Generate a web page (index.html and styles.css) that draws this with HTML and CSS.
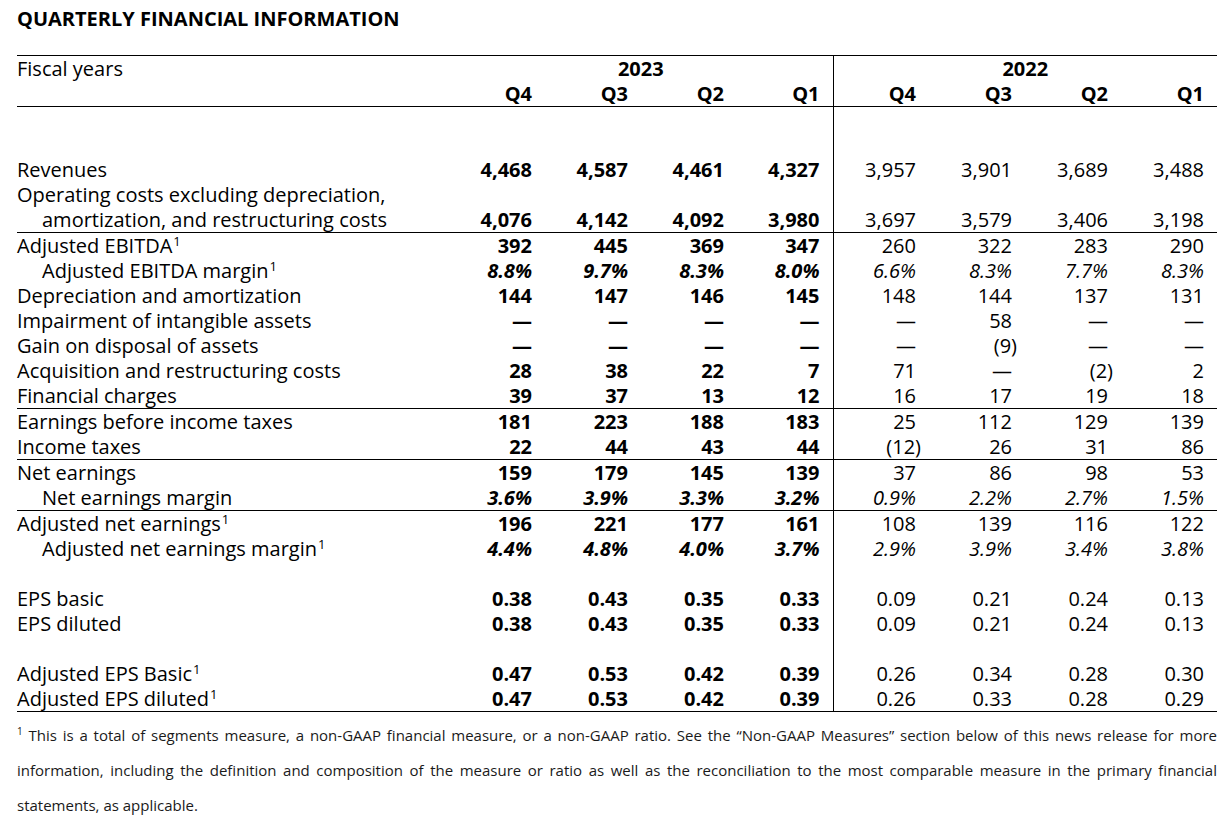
FILE: index.html
```html
<!DOCTYPE html>
<html lang="en">
<head>
<meta charset="utf-8">
<title>Quarterly Financial Information</title>
<link rel="stylesheet" href="styles.css">
</head>
<body>
<div class="page">
  <h1 class="title">QUARTERLY FINANCIAL INFORMATION</h1>
  <table class="fin">
    <colgroup>
      <col class="c-label">
      <col class="c-num"><col class="c-num"><col class="c-num"><col class="c-num">
      <col class="c-num"><col class="c-num"><col class="c-num"><col class="c-num">
    </colgroup>
    <thead>
      <tr class="hrow1">
        <th class="label">Fiscal years</th>
        <th colspan="4" class="year sep">2023</th>
        <th colspan="4" class="year">2022</th>
      </tr>
      <tr class="hrow2">
        <th class="label"></th>
        <th class="num">Q4</th><th class="num">Q3</th><th class="num">Q2</th><th class="num sep">Q1</th>
        <th class="num">Q4</th><th class="num">Q3</th><th class="num">Q2</th><th class="num">Q1</th>
      </tr>
    </thead>
    <tbody>
      <tr class="blank"><td class="label"></td><td class="b"></td><td class="b"></td><td class="b"></td><td class="b sep"></td><td></td><td></td><td></td><td></td></tr>
      <tr class="blank"><td class="label"></td><td class="b"></td><td class="b"></td><td class="b"></td><td class="b sep"></td><td></td><td></td><td></td><td></td></tr>
      <tr><td class="label">Revenues</td><td class="b">4,468</td><td class="b">4,587</td><td class="b">4,461</td><td class="b sep">4,327</td><td>3,957</td><td>3,901</td><td>3,689</td><td>3,488</td></tr>
      <tr class="tall"><td class="label hang">Operating costs excluding depreciation,<br>amortization, and restructuring costs</td><td class="b">4,076</td><td class="b">4,142</td><td class="b">4,092</td><td class="b sep">3,980</td><td>3,697</td><td>3,579</td><td>3,406</td><td>3,198</td></tr>
      <tr class="line"><td class="label">Adjusted EBITDA<sup>1</sup></td><td class="b">392</td><td class="b">445</td><td class="b">369</td><td class="b sep">347</td><td>260</td><td>322</td><td>283</td><td>290</td></tr>
      <tr class="pct"><td class="label indent">Adjusted EBITDA margin<sup>1</sup></td><td class="b">8.8%</td><td class="b">9.7%</td><td class="b">8.3%</td><td class="b sep">8.0%</td><td>6.6%</td><td>8.3%</td><td>7.7%</td><td>8.3%</td></tr>
      <tr><td class="label">Depreciation and amortization</td><td class="b">144</td><td class="b">147</td><td class="b">146</td><td class="b sep">145</td><td>148</td><td>144</td><td>137</td><td>131</td></tr>
      <tr><td class="label">Impairment of intangible assets</td><td class="b">—</td><td class="b">—</td><td class="b">—</td><td class="b sep">—</td><td>—</td><td>58</td><td>—</td><td>—</td></tr>
      <tr><td class="label">Gain on disposal of assets</td><td class="b">—</td><td class="b">—</td><td class="b">—</td><td class="b sep">—</td><td>—</td><td class="neg">(9)</td><td>—</td><td>—</td></tr>
      <tr><td class="label">Acquisition and restructuring costs</td><td class="b">28</td><td class="b">38</td><td class="b">22</td><td class="b sep">7</td><td>71</td><td>—</td><td class="neg">(2)</td><td>2</td></tr>
      <tr><td class="label">Financial charges</td><td class="b">39</td><td class="b">37</td><td class="b">13</td><td class="b sep">12</td><td>16</td><td>17</td><td>19</td><td>18</td></tr>
      <tr class="line"><td class="label">Earnings before income taxes</td><td class="b">181</td><td class="b">223</td><td class="b">188</td><td class="b sep">183</td><td>25</td><td>112</td><td>129</td><td>139</td></tr>
      <tr><td class="label">Income taxes</td><td class="b">22</td><td class="b">44</td><td class="b">43</td><td class="b sep">44</td><td class="neg">(12)</td><td>26</td><td>31</td><td>86</td></tr>
      <tr class="line"><td class="label">Net earnings</td><td class="b">159</td><td class="b">179</td><td class="b">145</td><td class="b sep">139</td><td>37</td><td>86</td><td>98</td><td>53</td></tr>
      <tr class="pct"><td class="label indent">Net earnings margin</td><td class="b">3.6%</td><td class="b">3.9%</td><td class="b">3.3%</td><td class="b sep">3.2%</td><td>0.9%</td><td>2.2%</td><td>2.7%</td><td>1.5%</td></tr>
      <tr class="line"><td class="label">Adjusted net earnings<sup>1</sup></td><td class="b">196</td><td class="b">221</td><td class="b">177</td><td class="b sep">161</td><td>108</td><td>139</td><td>116</td><td>122</td></tr>
      <tr class="pct"><td class="label indent">Adjusted net earnings margin<sup>1</sup></td><td class="b">4.4%</td><td class="b">4.8%</td><td class="b">4.0%</td><td class="b sep">3.7%</td><td>2.9%</td><td>3.9%</td><td>3.4%</td><td>3.8%</td></tr>
      <tr class="blank"><td class="label"></td><td class="b"></td><td class="b"></td><td class="b"></td><td class="b sep"></td><td></td><td></td><td></td><td></td></tr>
      <tr><td class="label">EPS basic</td><td class="b">0.38</td><td class="b">0.43</td><td class="b">0.35</td><td class="b sep">0.33</td><td>0.09</td><td>0.21</td><td>0.24</td><td>0.13</td></tr>
      <tr><td class="label">EPS diluted</td><td class="b">0.38</td><td class="b">0.43</td><td class="b">0.35</td><td class="b sep">0.33</td><td>0.09</td><td>0.21</td><td>0.24</td><td>0.13</td></tr>
      <tr class="blank"><td class="label"></td><td class="b"></td><td class="b"></td><td class="b"></td><td class="b sep"></td><td></td><td></td><td></td><td></td></tr>
      <tr><td class="label">Adjusted EPS Basic<sup>1</sup></td><td class="b">0.47</td><td class="b">0.53</td><td class="b">0.42</td><td class="b sep">0.39</td><td>0.26</td><td>0.34</td><td>0.28</td><td>0.30</td></tr>
      <tr class="last"><td class="label">Adjusted EPS diluted<sup>1</sup></td><td class="b">0.47</td><td class="b">0.53</td><td class="b">0.42</td><td class="b sep">0.39</td><td>0.26</td><td>0.33</td><td>0.28</td><td>0.29</td></tr>
    </tbody>
  </table>
  <p class="note"><sup>1</sup> This is a total of segments measure, a non-GAAP financial measure, or a non-GAAP ratio. See the “Non-GAAP Measures” section below of this news release for more information, including the definition and composition of the measure or ratio as well as the reconciliation to the most comparable measure in the primary financial statements, as applicable.</p>
</div>
</body>
</html>
```

FILE: styles.css
```css
html, body {
  margin: 0;
  padding: 0;
  background: #ffffff;
}

.page {
  padding: 6px 10px 0 17px;
  font-family: "Open Sans", "Liberation Sans", sans-serif;
  color: #000000;
}

.title {
  margin: 0 0 24px 0;
  font-size: 20px;
  line-height: 25px;
  font-weight: 700;
  letter-spacing: 0;
}

.fin {
  width: 1200px;
  border-collapse: collapse;
  table-layout: fixed;
  border-top: 1px solid #000;
  font-size: 20px;
  line-height: 25px;
}

.c-label { width: 432px; }
.c-num { width: 96px; }

.fin th,
.fin td {
  padding: 0 13px 0 0;
  height: 25px;
  text-align: right;
  vertical-align: bottom;
  white-space: nowrap;
}

.fin th {
  font-weight: 700;
}

.fin .label {
  text-align: left;
  font-weight: 400;
  padding: 0;
}

.fin .year {
  text-align: center;
  padding: 0;
}

.hrow1 th {
  vertical-align: top;
}

.hrow2 th {
  border-bottom: 1px solid #000;
}

.fin .sep {
  border-right: 1px solid #000;
}

.fin td.b {
  font-weight: 700;
}

.fin .neg {
  padding-right: 8px;
}

.pct td {
  font-style: italic;
}

.pct td.label {
  font-style: normal;
}

.fin .indent {
  padding-left: 25px;
}

.fin .hang {
  white-space: normal;
  padding-left: 25px;
  text-indent: -25px;
}

.tall td {
  height: 50px;
}

.line td {
  border-top: 1px solid #000;
}

.last td {
  border-bottom: 1px solid #000;
}

.fin sup {
  font-size: 13px;
  line-height: 0;
  vertical-align: 7px;
  margin-left: 1px;
}

.note {
  margin: 6px 0 0 0;
  width: 1200px;
  font-size: 15px;
  line-height: 35px;
  text-align: justify;
  color: #1a1a1a;
}

.note sup {
  font-size: 10px;
  line-height: 0;
  vertical-align: 6px;
}
```
